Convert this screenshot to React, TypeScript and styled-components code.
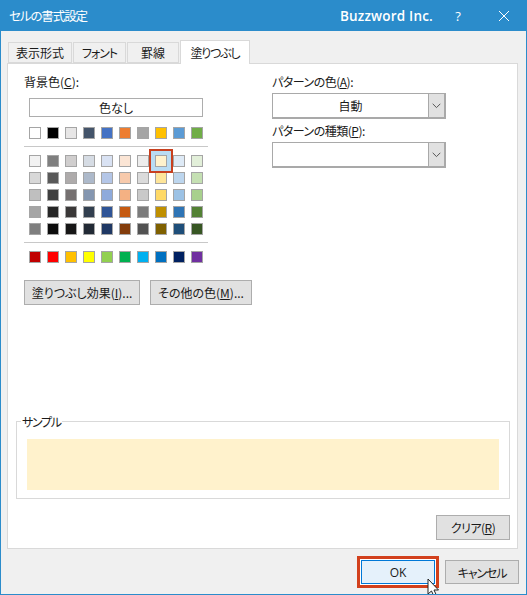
import React from 'react';
import styled, { createGlobalStyle } from 'styled-components';

const GlobalStyle = createGlobalStyle`
  html, body { margin: 0; padding: 0; background: #f0f0f0; }
  * { box-sizing: border-box; }
`;

const themeRow = ['#ffffff', '#000000', '#e7e6e6', '#44546a', '#4472c4', '#ed7d31', '#a5a5a5', '#ffc000', '#5b9bd5', '#70ad47'];
const tintRows = [
  ['#f2f2f2', '#7f7f7f', '#d0cece', '#d6dce4', '#d9e2f3', '#fbe5d5', '#ededed', '#fff2cc', '#deeaf6', '#e2efd9'],
  ['#d8d8d8', '#595959', '#aeabab', '#adb9ca', '#b4c6e7', '#f7caac', '#dbdbdb', '#fee599', '#bdd6ee', '#c5e0b3'],
  ['#bfbfbf', '#3f3f3f', '#757070', '#8496b0', '#8eaadb', '#f4b183', '#c9c9c9', '#ffd966', '#9cc2e5', '#a8d08d'],
  ['#a5a5a5', '#262626', '#3a3838', '#323f4f', '#2f5496', '#c55a11', '#7b7b7b', '#bf8f00', '#2e74b5', '#538135'],
  ['#7f7f7f', '#0c0c0c', '#171616', '#222a35', '#1f3864', '#833c0b', '#525252', '#7f6000', '#1e4e79', '#375623'],
];
const standardRow = ['#c00000', '#ff0000', '#ffc000', '#ffff00', '#92d050', '#00b050', '#00b0f0', '#0070c0', '#002060', '#7030a0'];

const Window = styled.div`
  position: relative;
  width: 527px;
  height: 595px;
  overflow: hidden;
  display: flex;
  flex-direction: column;
  background: #f0f0f0;
  border: solid #2b8ccb;
  border-width: 0 1px 1px 1px;
  font-family: "Noto Sans CJK JP", "Noto Sans", sans-serif;
  font-size: 12px;
  font-feature-settings: "palt";
  color: #1a1a1a;
`;

const TitleBar = styled.header`
  flex: none;
  height: 31px;
  margin: 0 -1px;
  padding: 0 0 0 9px;
  display: flex;
  align-items: center;
  background: #2b8ccb;
  color: #fff;
`;

const TitleText = styled.span`
  flex: 1;
  font-size: 12.5px;
  letter-spacing: -1.1px;
  margin-top: -1px;
`;

const Brand = styled.span`
  font-family: "Open Sans", "Noto Sans", sans-serif;
  font-size: 13.5px;
  font-weight: 600;
  letter-spacing: 0.2px;
  margin-right: 19px;
`;

const HelpMark = styled.span`
  width: 12px;
  margin-right: 34px;
  font-family: "Open Sans", sans-serif;
  font-size: 13px;
  text-align: center;
`;

const CloseMark = styled.svg`
  width: 12px;
  height: 12px;
  margin-right: 17px;
`;

const Body = styled.main`
  flex: 1;
  padding: 8px 9px 0 6px;
  display: flex;
  flex-direction: column;
`;

const TabStrip = styled.nav`
  flex: none;
  height: 24px;
  display: flex;
  align-items: flex-end;
  padding-left: 1px;
  position: relative;
  z-index: 1;
`;

const Tab = styled.div<{ $active?: boolean; $w: number; $track?: number }>`
  width: ${(p) => p.$w}px;
  height: ${(p) => (p.$active ? 24 : 21)}px;
  margin-bottom: ${(p) => (p.$active ? -1 : 0)}px;
  margin-right: ${(p) => (p.$active ? 0 : 1)}px;
  display: flex;
  align-items: center;
  justify-content: center;
  background: ${(p) => (p.$active ? '#fff' : '#f0f0f0')};
  border: 1px solid #d9d9d9;
  border-bottom: ${(p) => (p.$active ? 'none' : '1px solid #d9d9d9')};
  font-size: 12px;
  letter-spacing: ${(p) => p.$track ?? 0}px;
  white-space: nowrap;
`;

const Panel = styled.section`
  flex: none;
  width: 511px;
  height: 486px;
  background: #fff;
  border: 1px solid #d9d9d9;
  display: flex;
  flex-direction: column;
  padding: 9px 7px 0 8px;
`;

const Columns = styled.div`
  display: flex;
  height: 348px;
`;

const LeftColumn = styled.div`
  width: 256px;
  padding-left: 8px;
`;

const RightColumn = styled.div`
  padding-top: 0;
`;

const FieldLabel = styled.label<{ $top?: number; $track?: number }>`
  display: block;
  height: 18px;
  line-height: 18px;
  margin-top: ${(p) => p.$top ?? 0}px;
  font-size: 12px;
  letter-spacing: ${(p) => p.$track ?? 0}px;
  white-space: nowrap;
  u { text-underline-offset: 1px; }
`;

const NoColorButton = styled.div`
  width: 174px;
  height: 19px;
  margin: 7px 0 10px 5px;
  display: flex;
  align-items: center;
  justify-content: center;
  border: 1px solid #adadad;
  font-size: 12px;
`;

const SwatchGrid = styled.div`
  width: 174px;
  margin-left: 5px;
  display: grid;
  grid-template-columns: repeat(10, 12px);
  column-gap: 6px;
  row-gap: 5px;
`;

const Divider = styled.hr`
  width: 184px;
  height: 1px;
  border: none;
  background: #c8c8c8;
  margin: 7px 0 8px 0;
`;

const Swatch = styled.div<{ $color: string; $selected?: boolean }>`
  width: 12px;
  height: 12px;
  background: ${(p) => p.$color};
  border: 1px solid #a5a5a5;
  ${(p) => p.$selected && 'box-shadow: 0 0 0 4px #b9dcf3, 0 0 0 6px #c8401f; position: relative; z-index: 1;'}
`;

const ActionRow = styled.div`
  display: flex;
  gap: 10px;
  margin-top: 17px;
`;

const DialogButton = styled.div<{ $w: number; $h?: number; $track?: number }>`
  width: ${(p) => p.$w}px;
  height: ${(p) => p.$h ?? 25}px;
  display: flex;
  align-items: center;
  justify-content: center;
  background: #e1e1e1;
  border: 1px solid #adadad;
  font-size: 12px;
  letter-spacing: ${(p) => p.$track ?? 0}px;
  white-space: pre;
`;

const OkButton = styled(DialogButton)`
  background: #e5f1fb;
  border-color: #0078d7;
  box-shadow: 0 0 0 1px #fff, 0 0 0 4px #d2401c;
  font-family: "Open Sans", sans-serif;
`;

const SelectBox = styled.div`
  width: 174px;
  height: 26px;
  margin-top: 2px;
  display: flex;
  border: 2px solid #a9a9a9;
  border-left-width: 1px;
  border-top-width: 1px;
  background: #fff;
`;

const SelectValue = styled.div`
  flex: 1;
  display: flex;
  align-items: center;
  justify-content: center;
  font-size: 12px;
`;

const SelectArrow = styled.div`
  width: 16px;
  display: flex;
  align-items: center;
  justify-content: center;
  background: #e1e1e1;
  border-left: 1px solid #a9a9a9;
`;

const SampleBox = styled.div`
  width: 494px;
  height: 78px;
  padding: 17px 10px 0 10px;
  border: 1px solid #d9d9d9;
  position: relative;
`;

const SampleLegend = styled.span`
  position: absolute;
  top: -9px;
  left: 4px;
  padding: 0 1px;
  height: 18px;
  line-height: 18px;
  background: #fff;
  font-size: 12px;
  letter-spacing: -1.3px;
`;

const SampleFill = styled.div<{ $color: string }>`
  height: 51px;
  background: ${(p) => p.$color};
`;

const ClearRow = styled.div`
  display: flex;
  justify-content: flex-end;
  margin-top: 16px;
`;

const Footer = styled.footer`
  display: flex;
  justify-content: flex-end;
  gap: 10px;
  margin-top: 11px;
  margin-right: -2px;
`;

const Cursor = styled.svg`
  position: absolute;
  left: 426px;
  top: 578px;
  width: 13px;
  height: 20px;
`;

const Chevron = () => (
  <svg width="9" height="6" viewBox="0 0 9 6">
    <path d="M.7.8 4.5 4.6 8.3.8" fill="none" stroke="#555" strokeWidth="1" />
  </svg>
);

const SwatchRow = ({ colors, selected }: { colors: string[]; selected?: string }) => (
  <>
    {colors.map((c, i) => (
      <Swatch key={i} $color={c} $selected={c === selected} />
    ))}
  </>
);

export default function App() {
  return (
    <>
      <GlobalStyle />
      <Window>
        <TitleBar>
          <TitleText>セルの書式設定</TitleText>
          <Brand>Buzzword Inc.</Brand>
          <HelpMark>?</HelpMark>
          <CloseMark viewBox="0 0 12 12">
            <path d="M1 1 11 11M11 1 1 11" stroke="#fff" strokeWidth="1" fill="none" />
          </CloseMark>
        </TitleBar>
        <Body>
          <TabStrip>
            <Tab $w={64}>表示形式</Tab>
            <Tab $w={53} $track={-1}>フォント</Tab>
            <Tab $w={52}>罫線</Tab>
            <Tab $w={70} $active $track={-1.2}>塗りつぶし</Tab>
          </TabStrip>
          <Panel>
            <Columns>
              <LeftColumn>
                <FieldLabel>背景色(<u>C</u>):</FieldLabel>
                <NoColorButton>色なし</NoColorButton>
                <SwatchGrid>
                  <SwatchRow colors={themeRow} />
                </SwatchGrid>
                <Divider />
                <SwatchGrid>
                  {tintRows.map((row, i) => (
                    <SwatchRow key={i} colors={row} selected="#fff2cc" />
                  ))}
                </SwatchGrid>
                <Divider />
                <SwatchGrid>
                  <SwatchRow colors={standardRow} />
                </SwatchGrid>
                <ActionRow>
                  <DialogButton $w={116}>塗りつぶし効果(<u>I</u>)...</DialogButton>
                  <DialogButton $w={102}>その他の色(<u>M</u>)...</DialogButton>
                </ActionRow>
              </LeftColumn>
              <RightColumn>
                <FieldLabel $top={0} $track={-0.5}>パターンの色(<u>A</u>):</FieldLabel>
                <SelectBox>
                  <SelectValue>自動</SelectValue>
                  <SelectArrow><Chevron /></SelectArrow>
                </SelectBox>
                <FieldLabel $top={3} $track={-0.5}>パターンの種類(<u>P</u>):</FieldLabel>
                <SelectBox>
                  <SelectValue />
                  <SelectArrow><Chevron /></SelectArrow>
                </SelectBox>
              </RightColumn>
            </Columns>
            <SampleBox>
              <SampleLegend>サンプル</SampleLegend>
              <SampleFill $color="#fff2cc" />
            </SampleBox>
            <ClearRow>
              <DialogButton $w={74} $track={-0.5}>クリア(<u>R</u>)</DialogButton>
            </ClearRow>
          </Panel>
          <Footer>
            <OkButton $w={74} $h={24}>OK</OkButton>
            <DialogButton $w={74} $h={24} $track={-1.1}>キャンセル</DialogButton>
          </Footer>
        </Body>
        <Cursor viewBox="0 0 13 20">
          <path d="M1 1V16L4.5 13 7 18.5 9.5 17.5 7 12H11.5Z" fill="#fff" stroke="#222" strokeWidth="1" />
        </Cursor>
      </Window>
    </>
  );
}
